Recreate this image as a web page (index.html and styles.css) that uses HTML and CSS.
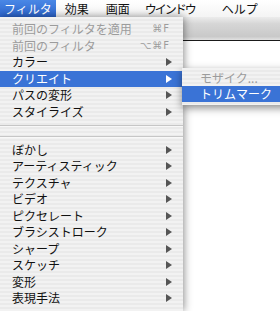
FILE: index.html
```html
<!DOCTYPE html>
<html lang="ja">
<head>
  <meta charset="UTF-8" />
  <title>フィルタ</title>
  <link rel="stylesheet" href="styles.css">
</head>
<body>
  <div class="screen">
    <div class="menubar">
      <span class="title active">フィルタ</span>
      <span class="title t-effect">効果</span>
      <span class="title t-view">画面</span>
      <span class="title t-window">ウインドウ</span>
      <span class="title t-help">ヘルプ</span>
    </div>

    <div class="desk">
      <div class="menu">
        <div class="item disabled"><span>前回のフィルタを適用</span><span class="key">⌘F</span></div>
        <div class="item disabled"><span>前回のフィルタ</span><span class="key">⌥⌘F</span></div>
        <div class="item"><span>カラー</span><i class="arrow"></i></div>
        <div class="item selected"><span>クリエイト</span><i class="arrow"></i></div>
        <div class="item"><span>パスの変形</span><i class="arrow"></i></div>
        <div class="item"><span>スタイライズ</span><i class="arrow"></i></div>
        <div class="sep"></div>
        <div class="sep"></div>
        <div class="item"><span>ぼかし</span><i class="arrow"></i></div>
        <div class="item"><span>アーティスティック</span><i class="arrow"></i></div>
        <div class="item"><span>テクスチャ</span><i class="arrow"></i></div>
        <div class="item"><span>ビデオ</span><i class="arrow"></i></div>
        <div class="item"><span>ピクセレート</span><i class="arrow"></i></div>
        <div class="item"><span>ブラシストローク</span><i class="arrow"></i></div>
        <div class="item"><span>シャープ</span><i class="arrow"></i></div>
        <div class="item"><span>スケッチ</span><i class="arrow"></i></div>
        <div class="item"><span>変形</span><i class="arrow"></i></div>
        <div class="item"><span>表現手法</span><i class="arrow"></i></div>
      </div>

      <div class="window">
        <div class="titlebar"></div>
        <div class="content"></div>
      </div>
    </div>

    <!-- submenu of クリエイト -->
    <div class="submenu">
      <div class="item disabled"><span>モザイク...</span></div>
      <div class="item selected"><span>トリムマーク</span></div>
    </div>
  </div>
</body>
</html>
```

FILE: styles.css
```css
body {
  margin: 0;
  font-family: "Noto Sans CJK JP", "Noto Sans", sans-serif;
  color: #111;
}

.screen {
  position: relative;
  width: 280px;
  height: 311px;
  overflow: hidden;
  background: #fff;
}

/* Menu bar */
.menubar {
  display: flex;
  height: 17px;
  background: linear-gradient(#ffffff, #f4f4f4);
  font-size: 12px;
  line-height: 17px;
  white-space: nowrap;
}

.title.active {
  padding: 0 4px;
  background: linear-gradient(#4a88e6, #2c64cc);
  color: #fff;
}

.t-effect { margin-left: 9px; }
.t-view { margin-left: 17px; }
.t-window { margin-left: 15px; letter-spacing: -2px; }
.t-help { margin-left: 27px; }

/* Area below the menu bar */
.desk {
  display: flex;
  height: 294px;
}

.menu,
.submenu {
  background: repeating-linear-gradient(to bottom, #f2f2f2 0 2px, #eaeaea 2px 4px);
  font-size: 12px;
}

.menu {
  position: relative;
  z-index: 2;
  flex: 0 0 183px;
  padding-top: 4px;
  box-shadow: 1px 0 8px rgba(0,0,0,0.45);
}

.item {
  display: flex;
  align-items: center;
  justify-content: space-between;
  height: 16.5px;
  padding: 0 11px 0 12px;
  line-height: 16px;
  white-space: nowrap;
}

.item.disabled {
  color: #9c9c9c;
}

.item.selected {
  background: #3a73d6;
  color: #fff;
}

.key {
  margin-right: 2px;
  font-family: "DejaVu Sans", sans-serif;
  font-size: 10px;
  letter-spacing: 1px;
}

.arrow {
  width: 0;
  height: 0;
  border-top: 4.5px solid transparent;
  border-bottom: 4.5px solid transparent;
  border-left: 6px solid #555;
}

.selected .arrow {
  border-left-color: #fff;
}

.sep {
  position: relative;
  height: 10.75px;
}

.sep::after {
  content: "";
  position: absolute;
  left: 0;
  right: 0;
  top: 5px;
  height: 1px;
  background: #c6c6c6;
  border-bottom: 1px solid #f8f8f8;
}

/* Window behind the menu */
.window {
  flex: 1;
  display: flex;
  flex-direction: column;
}

.titlebar {
  height: 23px;
  background: linear-gradient(#ececec, #d6d6d6 30%, #c9c9c9 85%, #e2e2e2);
  border-bottom: 1px solid #1a1a1a;
}

.content {
  flex: 1;
  background: #fff;
}

/* Submenu */
.submenu {
  position: absolute;
  z-index: 3;
  left: 182px;
  top: 68px;
  width: 110px;
  padding: 2px 0 3px;
  box-shadow: 0 3px 8px rgba(0,0,0,0.45);
}

.submenu .item {
  height: 16px;
  padding-left: 18px;
}
```
